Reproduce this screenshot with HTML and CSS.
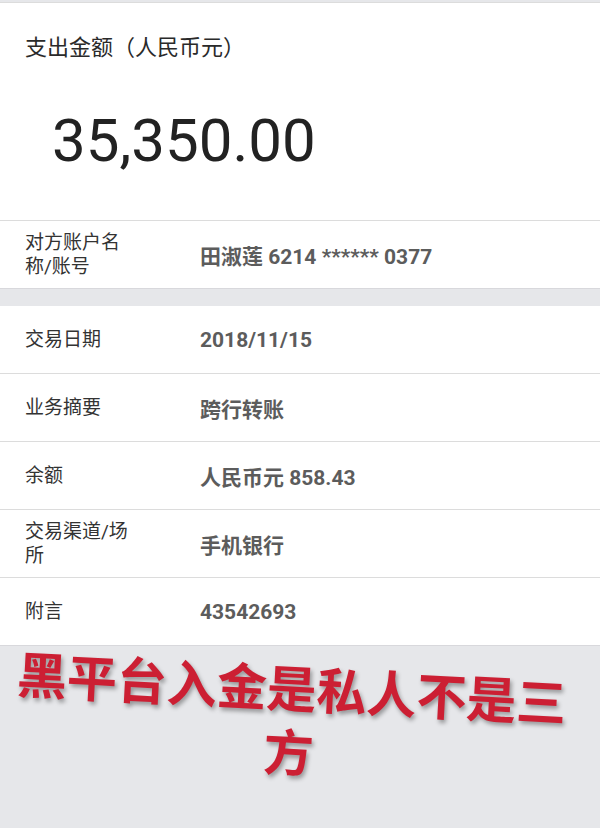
FILE: index.html
```html
<!DOCTYPE html>
<html lang="zh-CN">
<head>
    <meta charset="UTF-8">
    <meta name="viewport" content="width=device-width, initial-scale=1.0">
    <title>交易详情</title>
    <link rel="stylesheet" href="styles.css">
</head>
<body>
    <div class="summary">
        <p class="summary-label">支出金额（人民币元）</p>
        <p class="amount">35,350.00</p>
    </div>

    <div class="group">
        <div class="row">
            <div class="row-label">对方账户名称/账号</div>
            <div class="row-value">田淑莲 6214 ****** 0377</div>
        </div>
    </div>

    <div class="group">
        <div class="row">
            <div class="row-label">交易日期</div>
            <div class="row-value">2018/11/15</div>
        </div>
        <div class="row">
            <div class="row-label">业务摘要</div>
            <div class="row-value">跨行转账</div>
        </div>
        <div class="row">
            <div class="row-label">余额</div>
            <div class="row-value">人民币元 858.43</div>
        </div>
        <div class="row">
            <div class="row-label">交易渠道/场所</div>
            <div class="row-value">手机银行</div>
        </div>
        <div class="row">
            <div class="row-label">附言</div>
            <div class="row-value">43542693</div>
        </div>
    </div>

    <div class="footer">
        <p class="warning">黑平台入金是私人不是三方</p>
    </div>
</body>
</html>
```

FILE: styles.css
```css
body {
    margin: 0;
    padding: 2px 0 0;
    background: #e6e7ea;
    font-family: Roboto, "Noto Sans CJK SC", sans-serif;
    color: #333;
}

.summary {
    background: white;
    border-top: 1px solid #dcdcdc;
    border-bottom: 1px solid #dcdcdc;
    height: 217px;
}

.summary-label {
    margin: 0;
    padding: 29px 0 0 25px;
    font-size: 22px;
    line-height: 32px;
    color: #2a2a2a;
}

.amount {
    margin: 0;
    padding: 42px 0 0 52px;
    font-size: 60px;
    line-height: 70px;
    color: #222;
}

.group {
    background: white;
    margin-bottom: 17px;
    border-bottom: 1px solid #d8d8dc;
}

.group:last-of-type {
    margin-bottom: 0;
}

.row {
    display: flex;
    align-items: center;
    height: 67px;
    border-top: 1px solid #dcdcdc;
}

.group .row:first-child {
    border-top: none;
}

.row-label {
    width: 106px;
    padding-left: 25px;
    margin-right: 69px;
    font-size: 19px;
    line-height: 24px;
    color: #333;
}

.row-value {
    font-size: 21px;
    font-weight: bold;
    color: #5c5c5c;
}

.footer {
    height: 183px;
}

/* red caption laid over the screenshot, slightly tilted */
.warning {
    margin: 0;
    padding: 0 22px 0 2px;
    font-size: 50px;
    line-height: 64px;
    font-weight: bold;
    text-align: center;
    color: #cc1f33;
    text-shadow: 2px 3px 4px rgba(0, 0, 0, 0.35);
    transform: translateY(-4px) rotate(3deg);
}
```
